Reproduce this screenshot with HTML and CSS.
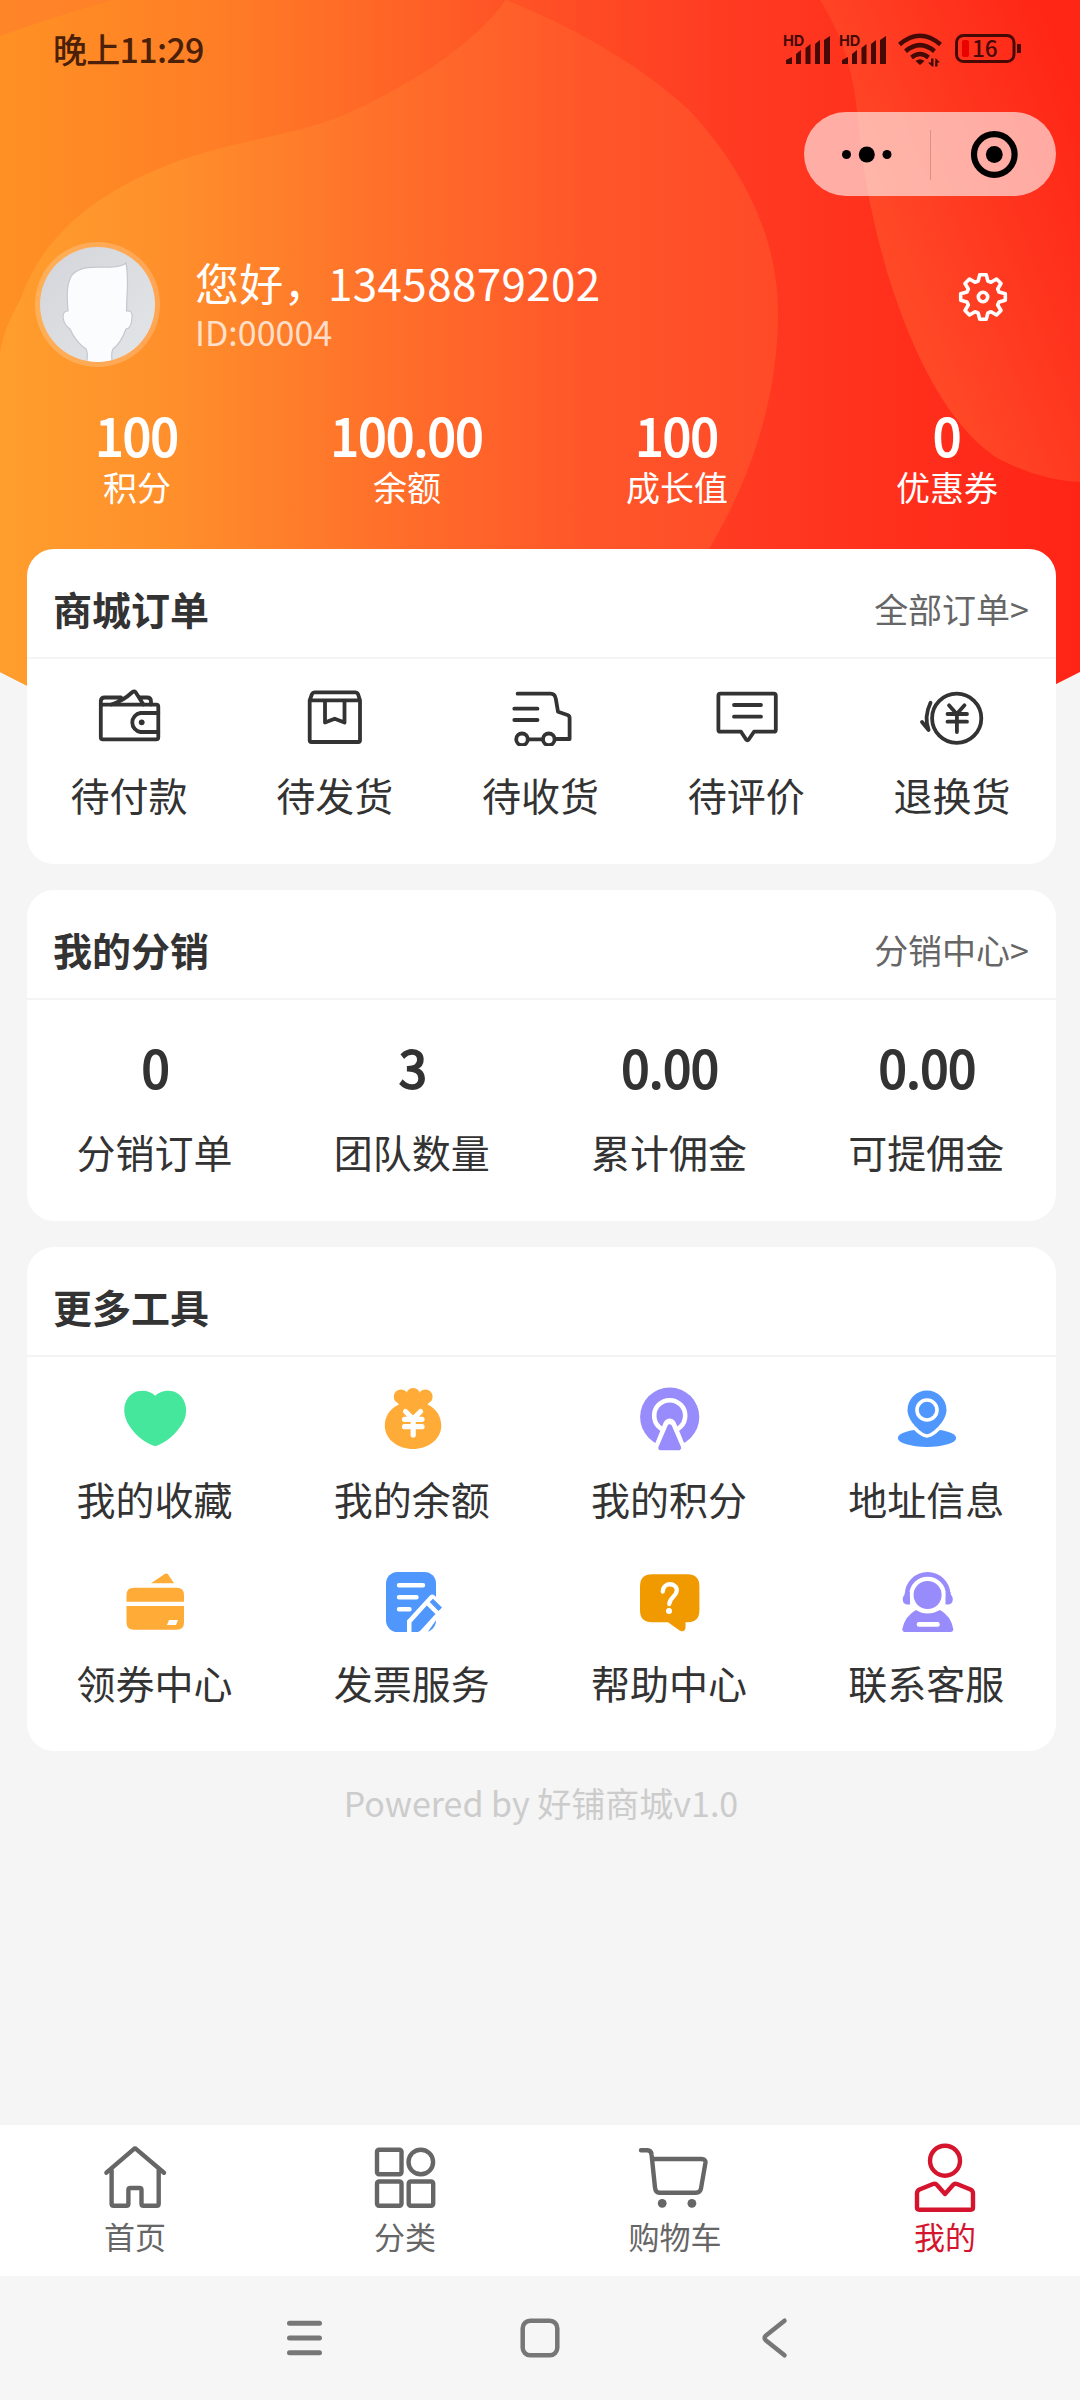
FILE: index.html
```html
<!DOCTYPE html>
<html lang="zh-CN">
<head>
<meta charset="utf-8">
<title>我的</title>
<link rel="stylesheet" href="styles.css">
</head>
<body>
<div class="page">
  <svg class="backdrop" viewBox="0 0 1080 830" aria-hidden="true">
    <defs>
      <linearGradient id="base" gradientUnits="userSpaceOnUse" x1="0" y1="0" x2="1080" y2="0">
        <stop offset="0" stop-color="#ff9124"/><stop offset=".2" stop-color="#ff7e26"/><stop offset=".46" stop-color="#ff5526"/><stop offset=".68" stop-color="#ff3a22"/><stop offset="1" stop-color="#ff2416"/>
      </linearGradient>
      <linearGradient id="blob" gradientUnits="userSpaceOnUse" x1="0" y1="0" x2="780" y2="0">
        <stop offset="0" stop-color="#ff9e2d"/><stop offset=".22" stop-color="#ff8f2b"/><stop offset=".5" stop-color="#ff6f2a"/><stop offset=".75" stop-color="#ff5629"/><stop offset="1" stop-color="#ff4a28"/>
      </linearGradient>
      <linearGradient id="wave" gradientUnits="userSpaceOnUse" x1="870" y1="200" x2="1085" y2="117">
        <stop offset="0" stop-color="#ff4826"/><stop offset=".45" stop-color="#ff3820"/><stop offset="1" stop-color="#ff2616"/>
      </linearGradient>
      <clipPath id="arc"><path d="M0 0H1080V672Q540 953 0 672Z"/></clipPath>
    </defs>
    <g clip-path="url(#arc)">
      <path fill="url(#base)" d="M0 0H1080V830H0Z"/>
      <path fill="#ff7b2d" opacity=".55" d="M0 0H112Q50 18 0 36Z"/>
      <path fill="url(#blob)" d="M506 0C590 34 650 74 689 110C745 170 778 240 778 312C778 400 750 480 709 549L600 830H0V353C4 330 12 315 21 298C45 230 105 185 193 156C240 140 300 134 344 115C400 90 470 50 506 0Z"/>
      <path fill="url(#wave)" d="M820 0C845 40 853 75 857 110C862 170 872 220 888 275C910 345 945 425 999 459Q1040 480 1080 482V0Z"/>
    </g>
  </svg>

  <header class="hero">
    <div class="status">
      <span class="clock">晚上11:29</span>
      <div class="status-icons">
        <svg class="signal" viewBox="0 0 48 34"><text class="hd" x="0" y="14">HD</text><path d="M3 32v-4l6-3v7zM13 32V22l5-4v14zM22.500 32V16l5-4v20zM32 32V12l5-4v24zM41 32V8l6-4v28z"/></svg>
        <svg class="signal" viewBox="0 0 48 34"><text class="hd" x="0" y="14">HD</text><path d="M3 32v-4l6-3v7zM13 32V22l5-4v14zM22.500 32V16l5-4v20zM32 32V12l5-4v24zM41 32V8l6-4v28z"/></svg>
        <svg class="wifi" viewBox="0 0 45 34"><g fill="none" stroke="#450a06" stroke-width="4.400"><path d="M1.500 12.500Q22 -5 42.500 12.500"/><path d="M7.500 19.200Q22 7 36.500 19.200"/><path d="M13.500 25.500Q22 18.500 30.500 25.500"/></g><path fill="#450a06" d="M17.500 29Q22 25.500 26.500 29L22 33ZM33 26.500h2.500v8h-1.500l-4-4h3zM37.500 26l4.500 4.500h-2.500v4h-2.500z"/></svg>
        <svg class="battery" viewBox="0 0 67 32"><rect x="1.500" y="2.500" width="57.500" height="26" rx="7" fill="none" stroke="#450a06" stroke-width="3"/><path fill="#450a06" d="M62 11h3a1 1 0 0 1 1 1v7a1 1 0 0 1-1 1h-3z"/><rect x="7" y="7" width="7" height="17" rx="2" fill="#e90200"/><text x="17" y="23.800">16</text></svg>
      </div>
    </div>

    <div class="capsule">
      <svg viewBox="0 0 126 83"><circle cx="42.500" cy="41.500" r="4.500"/><circle cx="62.800" cy="41.500" r="8"/><circle cx="83" cy="41.500" r="4.500"/></svg>
      <svg class="capsule-close" viewBox="0 0 126 83"><circle cx="64.300" cy="41.500" r="20.300" fill="none" stroke="#000" stroke-width="6.200"/><circle cx="64.300" cy="41.500" r="8.400"/></svg>
    </div>

    <div class="profile">
      <svg class="avatar" viewBox="0 0 126 126">
        <defs>
          <linearGradient id="av" x1="0" y1="0" x2="1" y2="1"><stop offset="0" stop-color="#d3d5da"/><stop offset="1" stop-color="#e3e6e8"/></linearGradient>
          <clipPath id="round"><circle cx="62.500" cy="62.500" r="57.500"/></clipPath>
        </defs>
        <circle cx="62.500" cy="62.500" r="62.500" fill="#fff" opacity=".2"/>
        <circle cx="62.500" cy="62.500" r="57.500" fill="url(#av)"/>
        <path clip-path="url(#round)" fill="#fbfcfe" stroke="#c3c7ce" stroke-width="1.200" d="M33 69C32 55 31 42 37 33C47 22 65 26 78 25Q88 24 91 21C94 35 92 46 91.500 69Q98 68 97 76Q96 87 91 87C87 98 82 104 78 107Q75 112 79 130H50Q54 112 51 107C45 103 39 96 35 87Q29 83 28 75Q28 69 33 69Z"/>
      </svg>
      <div class="who">
        <div class="name">您好，13458879202</div>
        <div class="uid">ID:00004</div>
      </div>
      <svg class="gear" viewBox="-25 -25 50 50"><path d="M-4.900 -16 -3.200 -22.300H3.200L4.900 -16 8 -14.700 13.500 -18 18 -13.500 14.700 -8 16 -4.900 22.300 -3.200V3.200L16 4.900 14.700 8 18 13.500 13.500 18 8 14.700 4.900 16 3.200 22.300H-3.200L-4.900 16 -8 14.700 -13.500 18 -18 13.500 -14.700 8 -16 4.900 -22.300 3.200V-3.200L-16 -4.900 -14.700 -8 -18 -13.500 -13.500 -18 -8 -14.700Z"/><circle r="4.700"/></svg>
    </div>

    <div class="stats">
      <div><b>100</b><span>积分</span></div>
      <div><b>100.00</b><span>余额</span></div>
      <div><b>100</b><span>成长值</span></div>
      <div><b>0</b><span>优惠券</span></div>
    </div>
  </header>

  <main class="cards">
    <section class="card card-orders">
      <div class="card-head"><h2>商城订单</h2><span class="more">全部订单&gt;</span></div>
      <div class="orders">
        <div class="order"><svg viewBox="0 0 80 64"><rect x="10.800" y="22.700" width="57.500" height="34.600" rx="2"/><path d="M10.800 24v-4.500q0-4 4-4H31M50 15.500h7q4 0 4 4v3M21.300 22.500Q33 19 42.500 10q2-1.500 3.300.5L53.400 22.500M68.300 31H50.500a9.600 9.600 0 0 0 0 19H68.300"/><circle class="solid" cx="51.700" cy="40.300" r="2.900"/></svg><span>待付款</span></div>
        <div class="order"><svg viewBox="0 0 80 64"><path d="M13.700 18.300 16 12q.8-1.700 2.500-1.700H59.500q1.700 0 2.500 1.700L64 18.300V58.300q0 1.700-1.700 1.700H15.400q-1.700 0-1.700-1.700ZM13.700 18.300H64M29 18.300V40.500L38.700 36.700 48.500 40.500V18.300"/></svg><span>待发货</span></div>
        <div class="order"><svg viewBox="0 0 80 64"><path d="M16.600 11.700H49.500q4.500 0 5.300 5L57 29.700 66.500 33q2.100.8 2.100 3V57H54.500M13.300 26.700H36.500M13.300 38H36.500M27.500 57.300H41"/><circle cx="21" cy="57.300" r="5.800"/><circle cx="47.800" cy="57.300" r="5.800"/></svg><span>待收货</span></div>
        <div class="order"><svg viewBox="0 0 80 64"><path d="M13.400 11.700H66.800q2 0 2 2V47.700q0 2-2 2H47L41.700 57.500q-1.300 1.500-2.600 0L34 49.700H13.400q-2 0-2-2V13.700q0-2 2-2ZM27 23H54M27 34.700H54"/></svg><span>待评价</span></div>
        <div class="order"><svg viewBox="0 0 80 64"><circle cx="43.700" cy="36.300" r="24.600"/><path d="M17.500 20.700C14 28 12 38 15.600 48L9 40M36 23.300 43.700 32 51.500 23.300M34.500 32H54M34.500 39.700H54M43.900 32V50"/></svg><span>退换货</span></div>
      </div>
    </section>

    <section class="card card-share">
      <div class="card-head"><h2>我的分销</h2><span class="more">分销中心&gt;</span></div>
      <div class="shares">
        <div><b>0</b><span>分销订单</span></div>
        <div><b>3</b><span>团队数量</span></div>
        <div><b>0.00</b><span>累计佣金</span></div>
        <div><b>0.00</b><span>可提佣金</span></div>
      </div>
    </section>

    <section class="card card-tools">
      <div class="card-head"><h2>更多工具</h2></div>
      <div class="tools">
        <div class="tool"><svg viewBox="0 0 72 72"><path fill="#45e79d" d="M35.200 11.700C41 6 51 5.500 57 9C65 14 68 24 65 34C61 45 49 57 38 61.300Q35.200 62.600 32.400 61.300C21 57 9 45 5.500 34C2.500 24 5 14 13.400 9C19.500 5.500 29.500 6 35.200 11.700Z"/></svg><span>我的收藏</span></div>
        <div class="tool"><svg viewBox="0 0 72 72"><g fill="#ffab37"><circle cx="24" cy="12.700" r="7.200"/><circle cx="36.200" cy="11" r="7"/><circle cx="48.400" cy="12.700" r="7.200"/><path d="M18.500 15.500H54L50.500 20.500C60 25 64.300 33 64.300 42C64 56 50 65 36 65S8 56 7.800 42C7.800 33 12 25 22 20.500Z"/></g><path fill="none" stroke="#fff" stroke-width="5.200" stroke-linecap="round" d="M28.500 27.500 36 35 43.600 27.500M27.500 35.300H45M27.500 42.700H45M36.200 36V51"/></svg><span>我的余额</span></div>
        <div class="tool"><svg viewBox="0 0 72 72"><circle cx="35.700" cy="33" r="29.600" fill="#988bfb"/><circle cx="35.700" cy="31.700" r="15.500" fill="none" stroke="#fff" stroke-width="4.600"/><path d="M35.700 41 45.500 65H26Z" fill="none" stroke="#fff" stroke-width="13" stroke-linejoin="round"/><path d="M35.700 42.500 45 64H26.500Z" fill="#988bfb" stroke="#988bfb" stroke-width="4.500" stroke-linejoin="round"/></svg><span>我的积分</span></div>
        <div class="tool"><svg viewBox="0 0 72 72"><ellipse cx="36" cy="54" rx="29.200" ry="9" fill="#5097fd"/><path d="M36 6.500A19.500 19.500 0 0 1 55.500 26C55.500 36 44 47 38.500 49.500Q36 50.800 33.500 49.500C28 47 16.500 36 16.500 26A19.500 19.500 0 0 1 36 6.500Z" fill="#5097fd" stroke="#fff" stroke-width="7" paint-order="stroke"/><circle cx="36" cy="26" r="10" fill="none" stroke="#fff" stroke-width="3.600"/></svg><span>地址信息</span></div>
        <div class="tool"><svg viewBox="0 0 72 72"><path fill="#ffab37" d="M31 15.300 44 6.500q2.800-2 4.500.5L54 15.300ZM6.500 33.700V27q0-7.300 7.300-7.300H56.700Q64 19.700 64 27v6.700ZM6.500 38H64V54.500q0 7.200-7.300 7.200H13.800q-7.300 0-7.300-7.200Z"/><path fill="#fff" d="M49 52H58L56 57H47Z"/></svg><span>领券中心</span></div>
        <div class="tool"><svg viewBox="0 0 72 72"><rect x="9" y="4" width="50" height="60" rx="11.500" fill="#5097fd"/><path d="M22 17.300H46M22 29.300H39.500M22 41.300H32.500" stroke="#fff" stroke-width="4.400" stroke-linecap="round"/><path fill="#fff" d="M30 65V52.500L53 27.500Q55.300 25.500 57.500 27.500L69 38 50 65Z"/><path fill="#5097fd" d="M34.500 64V54.500L49.800 37.500 58.500 46 43.500 62.500 41 64ZM52.700 34 56 30.800 65 39.500 61.500 43Z"/></svg><span>发票服务</span></div>
        <div class="tool"><svg viewBox="0 0 72 72"><path fill="#f09a00" d="M18 6.300H53.400q12 0 12 12V42.300q0 12-12 12H51.500V60q-1 4.500-5.500 2.700L34 54.300H18q-12 0-12-12V18.300q0-12 12-12Z"/><path d="M28.800 23.500C29 13.500 43 14.500 42.800 22.500C42.500 28 35.500 30 35.300 36" fill="none" stroke="#fff" stroke-width="4.300" stroke-linecap="round"/><circle cx="35" cy="43" r="3" fill="#fff"/></svg><span>帮助中心</span></div>
        <div class="tool"><svg viewBox="0 0 72 72"><g fill="#988bfb"><path d="M16 27a20.600 20.600 0 0 1 41.200 0v6" fill="none" stroke="#988bfb" stroke-width="4.600"/><path d="M14 24h5v12.500h-3q-4-.5-4.300-5 0-3 2-5ZM59.500 24h-5v12.500h3q4-.5 4.300-5 0-3-2-5Z"/><path d="M25 42Q36 49 49 42Q60 48 62.300 61Q62.300 64 59.500 64H14Q11.300 64 11.300 61Q14 48 25 42Z"/></g><circle cx="36.600" cy="27" r="15.900" fill="#988bfb" stroke="#fff" stroke-width="3.800"/><path d="M28 56.400H46.500" stroke="#fff" stroke-width="4.600" stroke-linecap="round"/></svg><span>联系客服</span></div>
      </div>
    </section>
  </main>

  <p class="powered">Powered by 好铺商城v1.0</p>

  <nav class="tabs">
    <div class="tab"><svg viewBox="0 0 80 76"><path d="M11.400 32.700 38.500 9.300q1.500-1.300 3 0L69 32.700M16.600 30V63.700q0 2 2 2H31.400q2 0 2-2V50q0-2 2-2H44.500q2 0 2 2V63.700q0 2 2 2H61.700q2 0 2-2V30"/></svg><span>首页</span></div>
    <div class="tab"><svg viewBox="0 0 80 76"><rect x="12" y="9.700" width="24.500" height="24.600" rx="2"/><circle cx="55.800" cy="22" r="12.300"/><rect x="12" y="41.500" width="24.500" height="24.300" rx="2"/><rect x="43.700" y="41.500" width="24.500" height="24.300" rx="2"/></svg><span>分类</span></div>
    <div class="tab"><svg viewBox="0 0 80 76"><path d="M6 10.300H12.500Q16.300 10.300 16.600 15L20 47.500Q20.500 52.700 24.500 52.700H61Q65.300 52.700 66 48.500L70.400 23Q70.800 19 66.500 19H18.500"/><circle class="wheel" cx="27.200" cy="63.300" r="4.400"/><circle class="wheel" cx="56.900" cy="63.300" r="4.400"/></svg><span>购物车</span></div>
    <div class="tab active"><svg viewBox="0 0 80 76"><circle cx="40" cy="20.700" r="15"/><path d="M40 54 32 45Q30.500 43 28 44L14.500 49.500Q12 50.700 12 53.500V67.500Q12 69.700 14.200 69.700H65.800Q68 69.700 68 67.500V53.500Q68 50.700 65.500 49.500L52 44Q49.500 43 48 45Z"/></svg><span>我的</span></div>
  </nav>

  <div class="sysnav">
    <svg viewBox="0 0 44 44"><path stroke-width="5" d="M7.500 7.300H37.500M7.500 22H37.500M7.500 36.700H37.500"/></svg>
    <svg viewBox="0 0 44 44"><rect x="4.700" y="4.700" width="34.600" height="34.600" rx="7.500"/></svg>
    <svg viewBox="0 0 44 44"><path d="M30.500 4.700 12 19.500Q9.200 22 12 24.500L30.500 39.300"/></svg>
  </div>
</div>
</body>
</html>
```

FILE: styles.css
```css
* { box-sizing: border-box; }

body {
  margin: 0;
  background: #f5f5f5;
  color: #333;
  font-family: "Noto Sans CJK SC", sans-serif;
}

svg { display: block; flex: none; }

.page {
  position: relative;
  width: 1080px;
  height: 2400px;
  display: flex;
  flex-direction: column;
  overflow: hidden;
}

/* decorative gradient behind the hero and the first card */
.backdrop {
  position: absolute;
  top: 0;
  left: 0;
  width: 1080px;
  height: 830px;
}

.hero {
  position: relative;
  height: 549px;
  color: #fff;
  display: flex;
  flex-direction: column;
}

.status {
  height: 112px;
  padding: 28px 58px 0 53px;
  display: flex;
  justify-content: space-between;
  align-items: flex-start;
  color: #4a2008;
}
.clock { font-size: 34px; line-height: 42px; font-weight: 500; letter-spacing: -.7px; }
.status-icons { display: flex; padding-top: 4px; fill: #450a06; }
.signal { width: 48px; height: 34px; margin-right: 8px; overflow: visible; }
.wifi { width: 45px; height: 34px; margin: 0 12px 0 3px; overflow: visible; }
.battery { width: 67px; height: 32px; margin-top: 1px; overflow: visible; }
.hd { font: 700 14.5px Inter, sans-serif; }
.battery text { font: 500 22.5px "Noto Sans CJK SC", sans-serif; }

.capsule {
  align-self: flex-end;
  width: 252px;
  height: 84px;
  margin-right: 24px;
  border-radius: 42px;
  background: rgba(255, 255, 255, .6);
  display: flex;
  align-items: center;
}
.capsule svg { width: 126px; height: 83px; }
.capsule-close {
  background: linear-gradient(#dc8f88, #dc8f88) no-repeat 0 17px / 1px 50px;
}

.profile {
  height: 126px;
  margin-top: 46px;
  padding: 0 72px 0 35px;
  display: flex;
}
.avatar { width: 126px; height: 126px; }
.who { flex: 1; padding: 15px 0 0 34px; }
.name { font-size: 44px; line-height: 50px; letter-spacing: .35px; }
.uid { margin-top: 3px; font-size: 34px; line-height: 44px; color: rgba(255, 255, 255, .75); }
.gear {
  width: 50px;
  height: 50px;
  margin-top: 30px;
  fill: none;
  stroke: #fff;
  stroke-width: 3.6;
  stroke-linejoin: round;
}

.stats {
  margin-top: 38px;
  padding-left: 2px;
  display: grid;
  grid-template-columns: repeat(4, 270px);
  text-align: center;
}
.stats b, .shares b {
  display: block;
  font-size: 50px;
  font-weight: 400;
  -webkit-text-stroke: 2px currentColor;
}
.stats b { line-height: 56px; }
.stats span { display: block; margin-top: 3px; font-size: 34px; line-height: 44px; }

.cards {
  position: relative;
  padding: 0 24px 0 27px;
  display: flex;
  flex-direction: column;
  gap: 26px;
}
.card { background: #fff; border-radius: 27px; overflow: hidden; }
.card-orders { height: 315px; }
.card-share { height: 331px; }
.card-tools { height: 504px; }

.card-head {
  height: 110px;
  padding: 9px 27px 0 26px;
  border-bottom: 2px solid #f4f4f4;
  display: flex;
  align-items: center;
  justify-content: space-between;
}
h2 { margin: 0; font-size: 39px; line-height: 50px; font-weight: 700; }
.more { padding-top: 3px; font-size: 34px; line-height: 50px; color: #666; }

.orders {
  padding-top: 23px;
  display: grid;
  grid-template-columns: repeat(5, 1fr);
}
.order, .tool, .tab {
  display: flex;
  flex-direction: column;
  align-items: center;
}
.order svg {
  width: 80px;
  height: 64px;
  margin-bottom: 23px;
  fill: none;
  stroke: #333;
  stroke-width: 3.8;
  stroke-linecap: round;
  stroke-linejoin: round;
}
.order .solid { fill: #333; stroke: none; }
.order span, .shares span, .tool span {
  display: block;
  margin-right: 2px;
  font-size: 39px;
  line-height: 50px;
}

.shares {
  padding-top: 36px;
  display: grid;
  grid-template-columns: repeat(4, 1fr);
  text-align: center;
}
.shares b { line-height: 60px; margin-bottom: 30px; }

.tools {
  padding-top: 27px;
  display: grid;
  grid-template-columns: repeat(4, 1fr);
  row-gap: 45px;
}
.tool svg { width: 72px; height: 72px; margin-bottom: 17px; }

.powered {
  margin: 27px 0 0;
  padding-left: 2px;
  text-align: center;
  font-size: 34px;
  line-height: 50px;
  color: #ccc;
}

.tabs {
  height: 151px;
  margin-top: auto;
  padding-top: 15px;
  background: #fff;
  display: grid;
  grid-template-columns: repeat(4, 1fr);
  color: #666;
}
.tab svg {
  width: 80px;
  height: 76px;
  fill: none;
  stroke: currentColor;
  stroke-width: 4.4;
  stroke-linecap: round;
  stroke-linejoin: round;
}
.tab .wheel { fill: currentColor; stroke: none; }
.tab span { font-size: 31px; line-height: 40px; }
.active { color: #d4152d; }

.sysnav {
  height: 124px;
  padding: 0 282px;
  background: #f6f6f6;
  display: flex;
  align-items: center;
  justify-content: space-between;
}
.sysnav svg {
  width: 44px;
  height: 44px;
  fill: none;
  stroke: #777;
  stroke-width: 4.5;
  stroke-linecap: round;
  stroke-linejoin: round;
}
```
